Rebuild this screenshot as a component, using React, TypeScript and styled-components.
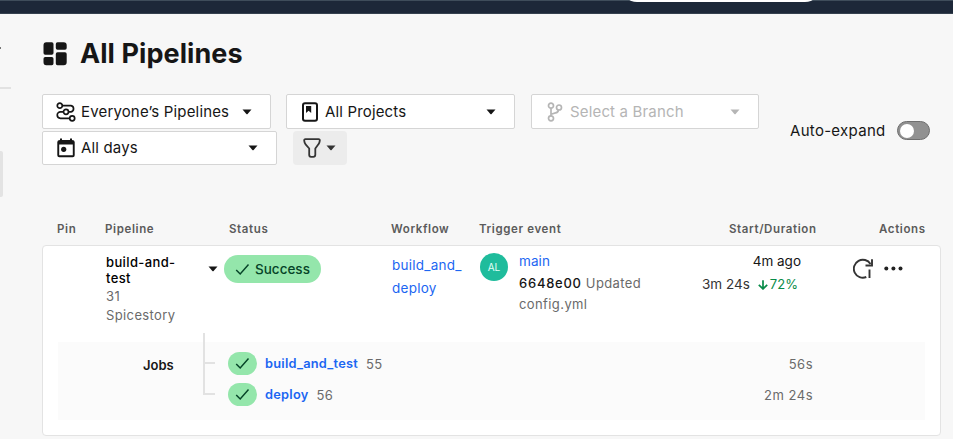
import React from "react";
import styled, { createGlobalStyle } from "styled-components";

const GlobalStyle = createGlobalStyle`
  * { box-sizing: border-box; }
  body { margin: 0; background: #f7f7f7; color: #161616; font-family: Inter, "Liberation Sans", sans-serif; overflow: hidden; }
  svg { display: block; flex: none; }
`;

const Page = styled.div`
  height: 439px;
  display: flex;
  flex-direction: column;
`;
const TopBar = styled.header`
  flex: none;
  height: 14px;
  background: #1d2839;
  border-top: 1px solid #3f4d5b;
  border-bottom: 1px solid #35414f;
`;
const SearchEdge = styled.div`
  width: 184px;
  height: 3px;
  margin: -2px 0 0 629px;
  background: #fff;
  border-radius: 0 0 8px 8px / 0 0 3px 3px;
`;
const Body = styled.div`
  flex: 1;
  display: flex;
  min-height: 0;
`;
const Sidebar = styled.aside`
  width: 42px;
  flex: none;
`;
const SideMark = styled.div`
  width: 1px;
  height: 2px;
  margin-top: 33px;
  background: #777;
`;
const SideRule = styled.div`
  width: 11px;
  height: 2px;
  margin-top: 38px;
  background: #e2e2e2;
`;
const SideActive = styled.div`
  width: 3px;
  height: 46px;
  margin-top: 62px;
  background: #e3e3e3;
  border-radius: 0 2px 2px 0;
`;
const Main = styled.main`
  width: 899px;
`;
const TitleRow = styled.div`
  display: flex;
  align-items: center;
  height: 34px;
  margin-top: 23px;
  padding-left: 1px;
`;
const Title = styled.h1`
  margin: 0 0 0 13px;
  font-size: 27px;
  line-height: 34px;
  font-weight: 700;
  letter-spacing: 0.07px;
`;
const Toolbar = styled.div`
  display: flex;
  align-items: center;
  margin-top: 23px;
  height: 72px;
`;
const Filters = styled.div`
  align-self: flex-start;
  width: 748px;
  display: grid;
  row-gap: 2px;
`;
const FilterLine = styled.div`
  display: flex;
`;
const Select = styled.button<{ $w: number; $h?: number; $gap?: number; $pad?: number; $end?: number; $disabled?: boolean }>`
  width: ${(p) => p.$w}px;
  height: ${(p) => p.$h ?? 35}px;
  margin: 0 ${(p) => p.$gap ?? 0}px 0 0;
  padding: 0 ${(p) => p.$end ?? 18}px 0 ${(p) => p.$pad ?? 13}px;
  display: flex;
  align-items: center;
  background: #fff;
  border: 1px solid #d5d5d5;
  border-radius: 2px;
  color: ${(p) => (p.$disabled ? "#b5b5b5" : "#161616")};
  font: 400 15px/20px Inter, sans-serif;
`;
const SelectText = styled.span<{ $ml: number }>`
  flex: 1;
  margin-left: ${(p) => p.$ml}px;
  text-align: left;
  white-space: nowrap;
  letter-spacing: 0.16px;
`;
const FilterButton = styled.button`
  width: 54px;
  height: 34px;
  padding: 0 11px 0 10px;
  display: flex;
  align-items: center;
  justify-content: space-between;
  background: #ececec;
  border: 0;
  border-radius: 4px;
  color: #343434;
`;
const ToggleLabel = styled.span`
  width: 107px;
  padding-top: 2px;
  font-size: 15px;
  line-height: 20px;
  letter-spacing: 0.3px;
  white-space: nowrap;
`;
const Toggle = styled.span`
  width: 33px;
  height: 19px;
  margin-top: 1px;
  padding: 1px 2px;
  background: #919191;
  border: 1px solid #6e6e6e;
  border-radius: 10px;
`;
const Knob = styled.span`
  display: block;
  width: 14px;
  height: 14px;
  margin-top: 0.5px;
  border-radius: 50%;
  background: #fff;
`;
const HeadRow = styled.div`
  display: grid;
  grid-template-columns: 48px 124px 162px 88px 250px 150px 46px;
  margin-top: 56px;
  padding-left: 15px;
  height: 23px;
  font-size: 11.5px;
  line-height: 15px;
  font-weight: 600;
  letter-spacing: 0.62px;
  color: #5b5b5b;
  white-space: nowrap;
`;
const Card = styled.section`
  height: 191px;
  background: #fff;
  border: 1px solid #e3e3e3;
  border-radius: 4px;
  padding: 0 15px;
`;
const Row = styled.div`
  height: 96px;
  display: grid;
  grid-template-columns: 100px 18px 168px 88px 39px 160px 169px 31px 19px;
  padding-left: 48px;
  font-size: 14px;
  white-space: nowrap;
`;
const PipelineCell = styled.div`
  padding-top: 8px;
  color: #6a6a6a;
  line-height: 19px;
  font-size: 13px;
  letter-spacing: 0.38px;
`;
const PipelineName = styled.div`
  width: 76px;
  margin-bottom: 1px;
  font-weight: 500;
  line-height: 16px;
  color: #000;
  white-space: normal;
`;
const Offset = styled.div<{ $top: number; $left?: number }>`
  padding: ${(p) => p.$top}px 0 0 ${(p) => p.$left ?? 0}px;
`;
const Badge = styled.span`
  width: 97px;
  height: 28px;
  padding-left: 11px;
  display: flex;
  align-items: center;
  gap: 5px;
  border-radius: 14px;
  background: #94e6ab;
  color: #064428;
  font-weight: 500;
  font-size: 13.5px;
`;
const WorkflowLink = styled.a`
  display: block;
  width: 74px;
  padding-top: 8px;
  line-height: 23px;
  color: #1c66f2;
  font-size: 13.5px;
  letter-spacing: 0.25px;
`;
const Avatar = styled.div`
  width: 28px;
  height: 28px;
  margin-top: 7px;
  display: grid;
  place-items: center;
  border-radius: 50%;
  background: #1fbc9c;
  color: #e2fff8;
  font-size: 10px;
`;
const TriggerCell = styled.div`
  padding-top: 5px;
  line-height: 21px;
  font-size: 13px;
  letter-spacing: 0.4px;
  color: #6a6a6a;
`;
const Branch = styled.a`
  display: block;
  margin-bottom: 1px;
  color: #1c66f2;
  font-size: 13.5px;
  letter-spacing: 0.1px;
`;
const Commit = styled.span`
  color: #161616;
  font-weight: 500;
  letter-spacing: 0.75px;
`;
const TimeCell = styled.div`
  padding: 4px 0 0 23px;
  color: #161616;
`;
const Started = styled.div`
  width: 99px;
  line-height: 23px;
  text-align: right;
  font-size: 13.5px;
`;
const Duration = styled.div`
  display: flex;
  align-items: center;
  line-height: 23px;
  font-size: 13.5px;
  color: #343434;
`;
const Change = styled.span`
  display: flex;
  align-items: center;
  gap: 2px;
  margin-left: 8px;
  font-size: 13px;
  color: #078b48;
`;
const Jobs = styled.div`
  position: relative;
  height: 78px;
  padding: 6px 112px 0 85px;
  display: grid;
  grid-template-columns: 85px 1fr;
  background: #fbfbfb;
`;
const JobsLabel = styled.div`
  font-size: 13px;
  line-height: 35px;
  font-weight: 600;
`;
/* Connector that hangs from the pipeline row into the job list */
const Tree = styled.div`
  position: absolute;
  left: 145px;
  top: -9px;
  width: 12px;
  height: 62px;
  border: 2px solid #e2e2e2;
  border-top: 0;
  border-right: 0;
  &::after { content: ""; display: block; height: 29px; border-bottom: 2px solid #e2e2e2; }
`;
const JobLine = styled.div`
  height: 31px;
  display: flex;
  align-items: center;
  font-size: 13px;
  letter-spacing: 0.3px;
  color: #6a6a6a;
`;
const JobBadge = styled.span`
  width: 29px;
  height: 23px;
  margin-right: 8px;
  display: grid;
  place-items: center;
  border-radius: 12px;
  background: #94e6ab;
  color: #064428;
`;
const JobName = styled.a`
  margin-right: 8px;
  color: #1c66f2;
  font-weight: 600;
  font-size: 12.800px;
  letter-spacing: 0.25px;
`;
const JobTime = styled.span`
  margin-left: auto;
  letter-spacing: 0.5px;
`;

const Caret = () => (
  <svg width="10" height="6" viewBox="0 0 10 6" fill="currentColor"><path d="M.5.5h9L5.600 5Q5 5.500 4.400 5z" /></svg>
);
const Check = () => (
  <svg width="15" height="13" viewBox="0 0 15 13" fill="none" stroke="currentColor" strokeWidth="1.5"><path d="M1.200 7l4 4L13.500 1.600" /></svg>
);
const BoardIcon = () => (
  <svg width="24" height="24" viewBox="0 0 24 24" fill="#161616">
    <path d="M3.300.3h5.500q1.700 0 1.700 1.700v9q0 1.700-1.700 1.700H2.200Q.5 12.700.5 11V3.300Q.5.3 3.300.3zM14.500.3h6.200q3 0 3 3V6q0 1.700-1.700 1.700h-7.500q-1.700 0-1.700-1.700V2q0-1.700 1.700-1.700zM2.200 15h6.600q1.700 0 1.700 1.700v4.900q0 1.700-1.700 1.700H3.300q-2.800 0-2.800-3v-3.600Q.5 15 2.200 15zM14.500 10.300H22q1.700 0 1.700 1.700v8.300q0 3-3 3h-6.200q-1.700 0-1.700-1.700V12q0-1.700 1.700-1.700z" />
  </svg>
);
const FlowIcon = () => (
  <svg width="20" height="20" viewBox="0 0 20 20" fill="none" stroke="currentColor" strokeWidth="1.7">
    <circle cx="3.800" cy="3.700" r="2.500" /><circle cx="10" cy="9.800" r="2.500" /><circle cx="16.200" cy="16.300" r="2.500" />
    <path d="M6.300 3.700H15a3.100 3.100 0 0 1 0 6.100h-2.500M7.500 9.800H4.500a3.200 3.200 0 0 0 0 6.500h9.200" />
  </svg>
);
const CalendarIcon = () => (
  <svg width="18" height="20" viewBox="0 0 18 20" fill="currentColor">
    <path fillRule="evenodd" d="M3 .5h2V2h8V.5h2V2q2.700 0 2.700 2v13.300q0 2-2 2H2.300q-2 0-2-2V4q0-2 2.700-2zM2.200 6.500v10.800h13.600V6.500z" />
    <circle cx="6.700" cy="11.300" r="2.600" />
  </svg>
);
const BookIcon = () => (
  <svg width="16" height="20" viewBox="0 0 16 20">
    <rect x="1" y="1.200" width="14" height="17.500" rx="2" fill="none" stroke="currentColor" strokeWidth="2" />
    <path d="M4 4h5.200v7L6.600 8.700 4 11z" fill="currentColor" />
  </svg>
);
const BranchIcon = () => (
  <svg width="16" height="20" viewBox="0 0 16 20" fill="none" stroke="currentColor" strokeWidth="1.700">
    <circle cx="4" cy="3.700" r="2.500" /><circle cx="4" cy="16.300" r="2.500" /><circle cx="12" cy="5.500" r="2.500" />
    <path d="M4 6.200v7.600M11.500 8q-.5 2.500-3 2.900L4 12.300" />
  </svg>
);
const FunnelIcon = () => (
  <svg width="18" height="20" viewBox="0 0 18 20" fill="none" stroke="currentColor" strokeWidth="1.800" strokeLinejoin="round">
    <path d="M2.500 1.200h13q1.500 0 1.300 1.500-.2 2.200-1.400 3.600L12.300 10.500v6.300q0 2-2 2H8q-1.800 0-1.800-2v-6.300L2.600 6.300Q1.400 4.900 1.200 2.700 1 1.200 2.500 1.200z" />
  </svg>
);
const RerunIcon = () => (
  <svg width="21" height="21" viewBox="0 0 21 21" fill="none" stroke="#343434" strokeWidth="1.900">
    <path d="M13.300 19A9 9 0 1 1 17.500 6" /><path d="M19 1.200v6.300h-6.500M16.500 11.500v8.500" />
  </svg>
);
const DotsIcon = () => (
  <svg width="19" height="5" viewBox="0 0 19 5" fill="#222"><circle cx="2.300" cy="2.500" r="2" /><circle cx="9.400" cy="2.500" r="2" /><circle cx="16.500" cy="2.500" r="2" /></svg>
);
const DownIcon = () => (
  <svg width="10" height="10" viewBox="0 0 10 10" fill="none" stroke="currentColor" strokeWidth="1.700"><path d="M5 .3v8.500M.8 4.800L5 8.900l4.200-4.100" /></svg>
);

const columns = ["Pin", "Pipeline", "Status", "Workflow", "Trigger event", "Start/Duration", "Actions"];
const jobs = [
  { name: "build_and_test", id: 55, time: "56s" },
  { name: "deploy", id: 56, time: "2m 24s" },
];

export default function App() {
  return (
    <Page>
      <GlobalStyle />
      <TopBar><SearchEdge /></TopBar>
      <Body>
        <Sidebar><SideMark /><SideRule /><SideActive /></Sidebar>
        <Main>
          <TitleRow><BoardIcon /><Title>All Pipelines</Title></TitleRow>
          <Toolbar>
            <Filters>
              <FilterLine>
                <Select $w={229} $gap={15}><FlowIcon /><SelectText $ml={5}>Everyone’s Pipelines</SelectText><Caret /></Select>
                <Select $w={229} $gap={16} $pad={15}><BookIcon /><SelectText $ml={7}>All Projects</SelectText><Caret /></Select>
                <Select $w={228} $pad={15} $disabled><BranchIcon /><SelectText $ml={7}>Select a Branch</SelectText><Caret /></Select>
              </FilterLine>
              <FilterLine>
                <Select $w={235} $h={34} $gap={16} $pad={14}><CalendarIcon /><SelectText $ml={6}>All days</SelectText><Caret /></Select>
                <FilterButton><FunnelIcon /><Caret /></FilterButton>
              </FilterLine>
            </Filters>
            <ToggleLabel>Auto-expand</ToggleLabel>
            <Toggle><Knob /></Toggle>
          </Toolbar>
          <HeadRow>{columns.map((c) => <span key={c}>{c}</span>)}</HeadRow>
          <Card>
            <Row>
              <PipelineCell><PipelineName>build-and-test</PipelineName>31<br />Spicestory</PipelineCell>
              <Offset $top={20} $left={2}><Caret /></Offset>
              <Offset $top={9}><Badge><Check />Success</Badge></Offset>
              <WorkflowLink>build_and_<br />deploy</WorkflowLink>
              <Avatar>AL</Avatar>
              <TriggerCell><Branch>main</Branch><Commit>6648e00</Commit> Updated<br />config.yml</TriggerCell>
              <TimeCell>
                <Started>4m ago</Started>
                <Duration>3m 24s<Change><DownIcon />72%</Change></Duration>
              </TimeCell>
              <Offset $top={12} $left={5}><RerunIcon /></Offset>
              <Offset $top={20} $left={5}><DotsIcon /></Offset>
            </Row>
            <Jobs>
              <Tree />
              <JobsLabel>Jobs</JobsLabel>
              <div>
                {jobs.map((j) => (
                  <JobLine key={j.id}>
                    <JobBadge><Check /></JobBadge>
                    <JobName>{j.name}</JobName>{j.id}
                    <JobTime>{j.time}</JobTime>
                  </JobLine>
                ))}
              </div>
            </Jobs>
          </Card>
        </Main>
      </Body>
    </Page>
  );
}
